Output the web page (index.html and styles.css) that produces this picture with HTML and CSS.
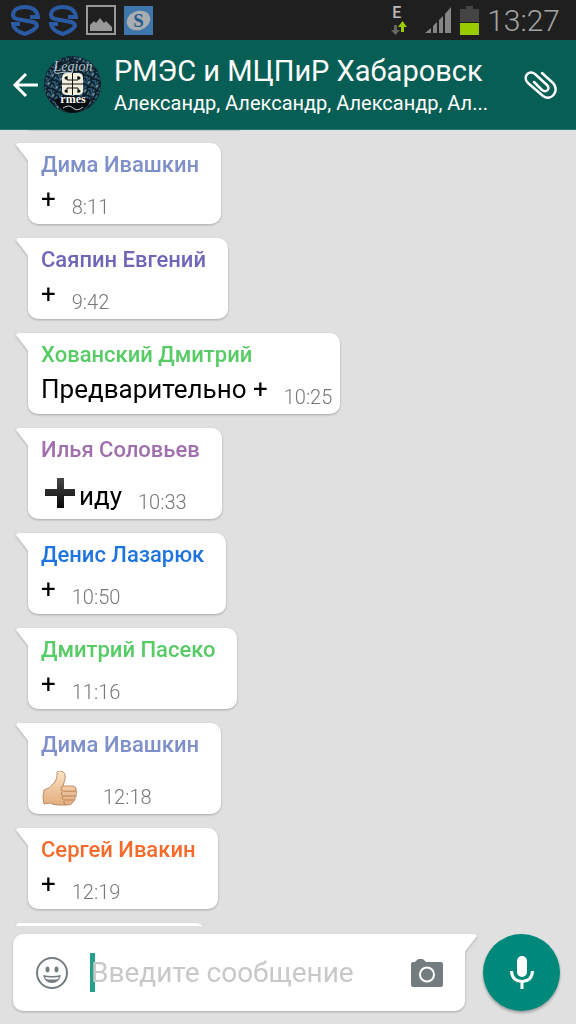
FILE: index.html
```html
<!DOCTYPE html>
<html lang="ru">
<head>
    <meta charset="UTF-8">
    <meta name="viewport" content="width=device-width, initial-scale=1.0">
    <title>РМЭС и МЦПиР Хабаровск</title>
    <link rel="stylesheet" href="styles.css">
</head>
<body>
    <div class="status">
        <svg class="s-logo" viewBox="0 0 30 32" width="30" height="32"><path d="M20 13H28C27 6 22 3 15 3C8 3 3 6 3 11Q3 14 7 15L23 18Q27 19 27 22Q25 26 15 30Q4 27 3 20H10"/></svg>
        <svg class="s-logo" viewBox="0 0 30 32" width="30" height="32"><path d="M20 13H28C27 6 22 3 15 3C8 3 3 6 3 11Q3 14 7 15L23 18Q27 19 27 22Q25 26 15 30Q4 27 3 20H10"/></svg>
        <svg class="gallery" viewBox="0 0 30 30" width="30" height="30"><rect x="1" y="1" width="28" height="28" fill="none" stroke="#999" stroke-width="2"/><path d="M4 26V20L8 16L10 18L14 13L18 18L20 16L26 22V26Z" fill="#999"/></svg>
        <svg class="app" viewBox="0 0 29 29" width="29" height="29"><rect width="29" height="29" fill="#3f76ab"/><ellipse cx="14.500" cy="14.500" rx="12" ry="9.500" fill="#a9adb0" transform="rotate(-20 14.500 14.500)"/><text x="14.500" y="21" text-anchor="middle">S</text></svg>
        <span class="spacer"></span>
        <div class="edge">
            <span>E</span>
            <svg viewBox="0 0 18 14" width="18" height="14"><path d="M3 4H6V9H9L4.500 14L0 9H3Z" fill="#666"/><path d="M10 11H13V6H16L11.500 0L7 6H10Z" fill="#99cc00"/></svg>
        </div>
        <svg class="signal" viewBox="0 0 27 27" width="27" height="27"><path d="M0 26L6 21V26ZM8 19L12 15V26H8ZM14 13L18 9V26H14ZM20 7L26 0V26H20Z" fill="#858585"/></svg>
        <svg class="battery" viewBox="0 0 19 29" width="19" height="29"><path d="M6 0H13V3H19V16H0V3H6Z" fill="#444"/><path d="M0 17H19V29H0Z" fill="#99cc00"/></svg>
        <time class="clock">13:27</time>
    </div>

    <header class="header">
        <button class="icon-btn" aria-label="Назад">
            <svg viewBox="0 0 26 26" width="26" height="26" fill="none" stroke="#fff" stroke-width="3"><path d="M14 2L3 13L14 24M2 13H26"/></svg>
        </button>
        <svg class="avatar" viewBox="0 0 57 57" width="57" height="57">
            <defs>
                <pattern id="lace" width="9" height="9" patternUnits="userSpaceOnUse" patternTransform="rotate(25)">
                    <path d="M0 2Q3 0 4 3T8 3M1 8Q1 5 4 6T8 7M6 0L5 3M2 4L1 6" fill="none" stroke="#4a83a0"/>
                    <circle cx="7" cy="5" r="1" fill="#8bb5c3"/>
                    <circle cx="3" cy="1" r="1" fill="#2e5e7c"/>
                </pattern>
            </defs>
            <circle cx="28.500" cy="28.500" r="28.500" fill="#0d1d29"/>
            <circle cx="28.500" cy="28.500" r="28" fill="url(#lace)"/>
            <path d="M10 44Q28 36 47 44Q42 56 28 57Q16 56 10 44Z" fill="#080d10"/>
            <path d="M13 6Q28 2 44 8L46 15L14 16Z" fill="#0b1721" opacity=".6"/>
            <text class="script" x="29" y="15" text-anchor="middle">Legion</text>
            <path d="M12 14Q8 18 15 17Q24 15 30 18" stroke="#b9c8cc" fill="none"/>
            <path d="M18 22Q18 17 23 17H34Q39 17 39 22V35Q39 39 34 39H23Q18 39 18 35Z" fill="#f0f0dd"/>
            <path d="M28.500 17V39M18 28H39M23 20V24H28M34 20V24H29M23 37V32H28M34 37V32H29" stroke="#111" fill="none"/>
            <g fill="#111"><circle cx="22" cy="22" r="1.500"/><circle cx="35" cy="22" r="1.500"/><circle cx="22" cy="35" r="1.500"/><circle cx="35" cy="35" r="1.500"/></g>
            <text class="gothic" x="29" y="47" text-anchor="middle">rmes</text>
            <path d="M19 52Q25 48 29 52T39 51" stroke="#ccc" fill="none"/>
        </svg>
        <div class="chat-info">
            <h1>РМЭС и МЦПиР Хабаровск</h1>
            <p>Александр, Александр, Александр, Ал...</p>
        </div>
        <button class="icon-btn" aria-label="Прикрепить">
            <svg viewBox="0 0 34 30" width="34" height="30" fill="none" stroke="#fff" stroke-width="2.500" stroke-linecap="round"><path d="M18 3L29 13C36 20 28 32 19 26L4 13C-2 7 5 -1 11 4L23 15C27 19 22 23 18 20L10 12"/></svg>
        </button>
    </header>

    <main class="chat">
        <div class="bubble-end"></div>
        <article class="bubble">
            <h2 class="name lavender">Дима Ивашкин</h2>
            <div class="row"><p>+</p><time>8:11</time></div>
        </article>
        <article class="bubble">
            <h2 class="name violet">Саяпин Евгений</h2>
            <div class="row"><p>+</p><time>9:42</time></div>
        </article>
        <article class="bubble">
            <h2 class="name green">Хованский Дмитрий</h2>
            <div class="row"><p>Предварительно +</p><time>10:25</time></div>
        </article>
        <article class="bubble">
            <h2 class="name purple">Илья Соловьев</h2>
            <div class="row tall">
                <svg class="emoji" viewBox="0 0 38 38" width="38" height="38">
                    <defs><linearGradient id="plus" x2="0" y2="1"><stop stop-color="#484848"/><stop offset="1" stop-color="#080808"/></linearGradient></defs>
                    <path d="M16 2H23V13H34V20H23V32H16V20H4V13H16Z" fill="url(#plus)"/>
                </svg>
                <p>иду</p><time>10:33</time>
            </div>
        </article>
        <article class="bubble">
            <h2 class="name blue">Денис Лазарюк</h2>
            <div class="row"><p>+</p><time>10:50</time></div>
        </article>
        <article class="bubble">
            <h2 class="name green">Дмитрий Пасеко</h2>
            <div class="row"><p>+</p><time>11:16</time></div>
        </article>
        <article class="bubble">
            <h2 class="name lavender">Дима Ивашкин</h2>
            <div class="row tall">
                <svg class="emoji thumb" viewBox="0 0 38 38" width="38" height="38">
                    <defs><linearGradient id="skin" x2="0" y2="1"><stop stop-color="#fbe3c4"/><stop offset="1" stop-color="#e3ad7e"/></linearGradient></defs>
                    <path d="M3 19Q9 18 13 12Q17 7 16 3Q16 -1 20 0Q25 1 24 8L22 15H32Q36 16 35 19Q36 21 35 23Q36 25 34 27Q34 30 32 31Q31 34 26 34H18Q12 34 9 32L3 33Q1 26 3 19Z" fill="url(#skin)" stroke="#bd8d66"/>
                    <path d="M22 15Q19 16 20 19Q21 21 35 20M21 21Q19 25 23 25H34M22 25Q20 29 24 29H33M23 30Q22 33 25 34" fill="none" stroke="#b98259"/>
                </svg>
                <time>12:18</time>
            </div>
        </article>
        <article class="bubble">
            <h2 class="name orange">Сергей Ивакин</h2>
            <div class="row"><p>+</p><time>12:19</time></div>
        </article>
        <div class="bubble bubble-start"></div>
    </main>

    <footer class="composer">
        <div class="field">
            <button class="icon-btn" aria-label="Смайлики">
                <svg viewBox="0 0 32 32" width="32" height="32"><circle cx="16" cy="16" r="15" fill="none" stroke="#737d80" stroke-width="2"/><g fill="#737d80"><ellipse cx="11.500" cy="12.500" rx="2" ry="3"/><ellipse cx="20.500" cy="12.500" rx="2" ry="3"/><path d="M7 18Q16 20 25 18Q23 26 16 26Q9 26 7 18Z"/></g><path d="M9 20Q16 21 23 20L22 22Q16 23 10 22Z" fill="#fff"/></svg>
            </button>
            <div class="entry">
                <input type="text" placeholder="Введите сообщение" aria-label="Введите сообщение">
            </div>
            <button class="icon-btn" aria-label="Камера">
                <svg viewBox="0 0 32 28" width="32" height="28"><path d="M4 3L6 1Q7 0 8 0H11Q12 0 13 1L15 3H30Q32 3 32 5V26Q32 28 30 28H2Q0 28 0 26V5Q0 3 2 3Z" fill="#737d80"/><circle cx="16" cy="15.500" r="7" fill="none" stroke="#fff" stroke-width="2"/></svg>
            </button>
        </div>
        <button class="mic" aria-label="Голосовое сообщение">
            <svg viewBox="0 0 24 34" width="24" height="34"><rect x="7" y="0" width="10" height="21" rx="5" fill="#fff"/><path d="M1.500 15Q2 25 12 25.500Q22 25 22.500 15M12 25V33" fill="none" stroke="#fff" stroke-width="3"/></svg>
        </button>
    </footer>
</body>
</html>
```
FILE: styles.css
```css
* {
    box-sizing: border-box;
}
body {
    display: flex;
    flex-direction: column;
    height: 100vh;
    margin: 0;
    overflow: hidden;
    background-color: #e0e0e0;
    color: #000;
    font-family: Roboto, "Noto Sans", sans-serif;
}
h1, h2, p {
    margin: 0;
    font-weight: 400;
    white-space: nowrap;
}
button {
    padding: 0;
    border: none;
    background: none;
    cursor: pointer;
}
svg {
    display: block;
    flex-shrink: 0;
}
.icon-btn {
    flex-shrink: 0;
}

/* Phone status bar */
.status {
    display: flex;
    align-items: center;
    gap: 8px;
    height: 40px;
    flex-shrink: 0;
    padding: 0 16px 0 10px;
    background-color: #1f1f1f;
}
.s-logo path {
    fill: none;
    stroke: #2b5aa5;
    stroke-width: 4;
}
.app text {
    font: bold 19px "Liberation Serif", serif;
    fill: #255b91;
}
.spacer {
    flex: 1;
}
.edge {
    margin-right: 8px;
    font-size: 16px;
    font-weight: 500;
    line-height: 16px;
    color: #bbb;
}
.edge span {
    padding-left: 1px;
}
.clock {
    font-size: 30px;
    font-weight: 300;
    color: #a5a5a5;
}

/* Chat header */
.header {
    display: flex;
    align-items: center;
    height: 90px;
    flex-shrink: 0;
    padding: 0 18px 0 12px;
    background-color: #075e54;
    border-bottom: 1px solid #2d766e;
    z-index: 1;
}
.avatar {
    margin: 0 13px 0 6px;
}
.script {
    font: italic 14px "Liberation Serif", serif;
    fill: #b9c8cc;
}
.gothic {
    font: bold 12px "Liberation Serif", serif;
    fill: #fff;
}
.chat-info {
    flex: 1;
    min-width: 0;
    color: #fff;
}
.chat-info h1 {
    font-size: 29px;
    line-height: 36px;
}
.chat-info p {
    font-size: 20px;
    line-height: 28px;
}

/* Messages */
.chat {
    display: flex;
    flex: 1;
    flex-direction: column;
    align-items: flex-start;
    gap: 14px;
    min-height: 0;
    overflow: hidden;
    padding-left: 28px;
}
.bubble, .field {
    position: relative;
    border-radius: 10px;
    background-color: #fff;
    filter: drop-shadow(0 1px 1px rgba(0, 0, 0, 0.25));
}
.bubble {
    flex-shrink: 0;
    padding: 8px 8px 5px 13px;
    border-top-left-radius: 0;
}
.bubble::before {
    content: "";
    position: absolute;
    top: 0;
    left: -12px;
    width: 13px;
    height: 19px;
    border-top-left-radius: 3px;
    background-color: #fff;
    clip-path: polygon(0 0, 100% 0, 100% 100%, 0 2px);
}
.bubble-end {
    width: 212px;
    height: 1px;
    flex-shrink: 0;
    margin-bottom: -2px;
    background-color: #c4c4c4;
}
.bubble-start {
    width: 178px;
    height: 81px;
}
.name {
    margin-right: 14px;
    font-size: 22px;
    font-weight: 500;
    line-height: 28px;
}
.row {
    display: flex;
    align-items: flex-end;
    height: 40px;
}
.row p {
    font-size: 26px;
    line-height: 40px;
}
.row time {
    margin-left: 16px;
    font-size: 20px;
    font-weight: 300;
    line-height: 24px;
    color: #777;
}
.tall {
    height: 50px;
}
.tall p {
    line-height: 36px;
}
.thumb {
    margin-right: 8px;
}
.lavender {
    color: #7f8fc9;
}
.violet {
    color: #7066b9;
}
.green {
    color: #57cb66;
}
.purple {
    color: #a06fae;
}
.blue {
    color: #1f75df;
}
.orange {
    color: #f56b2b;
}

/* Message input */
.composer {
    display: flex;
    flex-shrink: 0;
    align-items: flex-end;
    gap: 18px;
    padding: 8px 16px 13px 13px;
}
.field {
    display: flex;
    flex: 1;
    align-items: center;
    height: 77px;
    min-width: 0;
    padding: 0 22px 0 23px;
    border-top-right-radius: 0;
}
.field::after {
    content: "";
    position: absolute;
    top: 0;
    right: -12px;
    width: 13px;
    height: 19px;
    border-top-right-radius: 3px;
    background-color: #fff;
    clip-path: polygon(0 0, 100% 0, 100% 2px, 0 100%);
}
.entry {
    flex: 1;
    min-width: 0;
    margin-left: 22px;
    background: linear-gradient(#26a08d, #26a08d) no-repeat left center / 5px 39px;
}
.entry input {
    display: block;
    width: 100%;
    height: 40px;
    padding: 0 0 0 1px;
    border: none;
    outline: none;
    background: none;
    font: 28px Roboto, "Noto Sans", sans-serif;
}
.entry input::placeholder {
    color: #c8c8c8;
    opacity: 1;
}
.mic {
    display: flex;
    align-items: center;
    justify-content: center;
    flex-shrink: 0;
    width: 77px;
    height: 77px;
    border-radius: 50%;
    background-color: #00897b;
    box-shadow: 0 2px 3px rgba(0, 0, 0, 0.3);
}
```
